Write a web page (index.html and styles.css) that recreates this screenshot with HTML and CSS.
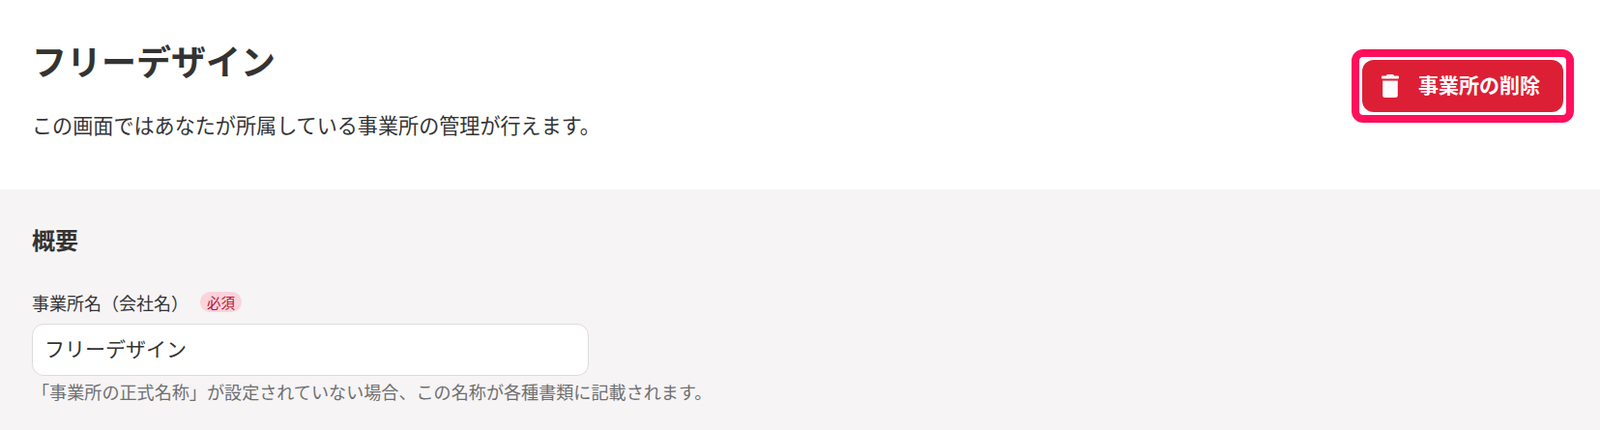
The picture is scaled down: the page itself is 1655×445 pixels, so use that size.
FILE: index.html
```html
<!DOCTYPE html>
<html lang="ja">
<head>
    <meta charset="UTF-8">
    <meta name="viewport" content="width=device-width, initial-scale=1.0">
    <title>事業所の管理</title>
    <link rel="stylesheet" href="styles.css">
</head>
<body>
    <header class="page-head">
        <div class="page-title">
            <h1>フリーデザイン</h1>
            <p>この画面ではあなたが所属している事業所の管理が行えます。</p>
        </div>
        <div class="highlight">
            <button class="delete-btn" type="button">
                <svg class="trash" viewBox="0 0 18 24" aria-hidden="true">
                    <path d="M5.800 0h6.400l1 1.500H17a1 1 0 0 1 1 1v1a1 1 0 0 1-1 1H1a1 1 0 0 1-1-1v-1a1 1 0 0 1 1-1h3.800z"/>
                    <path d="M1.200 6.500h15.600v15a2.500 2.500 0 0 1-2.500 2.500H3.700a2.500 2.500 0 0 1-2.500-2.500z"/>
                </svg>
                <span class="delete-label">事業所の削除</span>
            </button>
        </div>
    </header>

    <section class="overview">
        <h2>概要</h2>
        <div class="field-label">
            <label for="office-name">事業所名（会社名）</label>
            <span class="required">必須</span>
        </div>
        <input id="office-name" class="text-input" type="text" value="フリーデザイン">
        <p class="help">「事業所の正式名称」が設定されていない場合、この名称が各種書類に記載されます。</p>
    </section>
</body>
</html>
```

FILE: styles.css
```css
* {
    box-sizing: border-box;
}

html,
body {
    height: 100%;
}

body {
    margin: 0;
    display: flex;
    flex-direction: column;
    font-family: "Noto Sans CJK JP", "Noto Sans", sans-serif;
    color: #333;
    background-color: #fff;
}

.page-head {
    display: flex;
    justify-content: space-between;
    align-items: flex-start;
    height: 196px;
    padding: 51px 27px 0 33px;
}

.page-title {
    margin-top: -16px;
}

h1 {
    margin: 0;
    font-size: 36px;
    line-height: 54px;
    font-weight: 700;
}

.page-title p {
    margin: 25px 0 0;
    font-size: 21.1px;
    line-height: 30px;
}

.highlight {
    padding: 3px;
    border: 8px solid #ff0f5c;
    border-radius: 12px;
}

.delete-btn {
    display: flex;
    align-items: center;
    width: 208px;
    height: 54px;
    padding: 0 0 0 20px;
    border: none;
    border-radius: 12px;
    background-color: #dc1f35;
    color: #fff;
    font-family: inherit;
    font-size: 21px;
    font-weight: 700;
}

.trash {
    flex: none;
    width: 18px;
    height: 24px;
    margin-right: 20px;
    fill: #fff;
}

.delete-label {
    padding-bottom: 5px;
}

.overview {
    flex: 1;
    padding: 0 33px;
    background-color: #f6f4f5;
}

h2 {
    margin: 37px 0 0;
    font-size: 24px;
    line-height: 30px;
    font-weight: 700;
}

.field-label {
    display: flex;
    align-items: center;
    margin-top: 36px;
    height: 27px;
    font-size: 18px;
}

.required {
    margin-left: 12px;
    padding: 0 7px;
    border-radius: 11px;
    background-color: #fbd3da;
    color: #b3123a;
    font-size: 14.5px;
    line-height: 21px;
}

.text-input {
    display: block;
    width: 576px;
    height: 54px;
    margin: 9px 0 0;
    padding: 0 12px 5px;
    border: 1px solid #dcdcdc;
    border-radius: 12px;
    background-color: #fff;
    color: #333;
    font-family: inherit;
    font-size: 21px;
}

.help {
    margin: 3px 0 0;
    font-size: 18.1px;
    line-height: 27px;
    color: #6f6f6f;
}
```
